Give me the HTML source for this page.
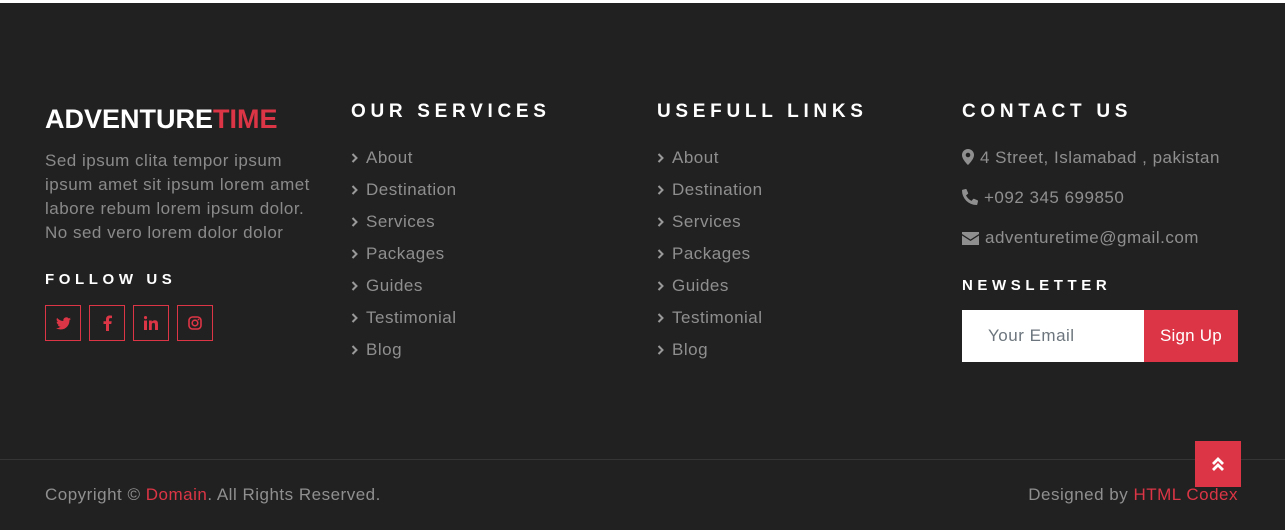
<!DOCTYPE html>
<html><head><style>
*{margin:0;padding:0;box-sizing:border-box}
body{width:1285px;height:530px;background:#212121;font-family:"Liberation Sans",sans-serif;color:#8f8f8f;position:relative;overflow:hidden;font-size:17px;letter-spacing:0.5px}
.top{position:absolute;top:0;left:0;width:1285px;height:3px;background:#fff}
.a{position:absolute;white-space:nowrap}
.logo{left:45px;top:104px;font-size:27px;font-weight:bold;color:#fff;letter-spacing:0}
.logo span{color:#dc3545}
.p{left:45px;top:149px;line-height:24px;color:#8a8a8a}
.h{font-size:19px;font-weight:bold;color:#fff;letter-spacing:4.7px;top:101px}
.h2{font-size:15px;font-weight:bold;color:#fff;letter-spacing:4.6px}
.soc{top:305px;width:36px;height:36px;border:1px solid #dc3545;color:#dc3545;display:flex;align-items:center;justify-content:center}
.ul{top:142px}
.ul div{height:32px;line-height:32px}
.ul svg{margin-right:8px;vertical-align:0}
.c svg{vertical-align:-2px;margin-right:6px}
.c{left:962px}
.inp{left:962px;top:310px;width:182px;height:52px;background:#fff;color:#6c757d;padding:16px 0 0 26px}
.btn{left:1144px;top:310px;width:94px;height:52px;background:#dc3545;color:#fff;padding:16px 0 0 16px;letter-spacing:0.2px}
.line{left:0;top:459px;width:1285px;height:1px;background:#353535}
.up{left:1195px;top:441px;width:46px;height:46px;background:#dc3545;display:flex;align-items:center;justify-content:center}
.r{color:#dc3545}
</style></head><body>
<div class="top"></div>
<div class="a logo">ADVENTURE<span>TIME</span></div>
<div class="a p">Sed ipsum clita tempor ipsum<br>ipsum amet sit ipsum lorem amet<br>labore rebum lorem ipsum dolor.<br>No sed vero lorem dolor dolor</div>
<div class="a h2" style="left:45px;top:271px">FOLLOW US</div>
<div class="a soc" style="left:45px"><svg width="15" height="13" viewBox="0 0 24 20"><path fill="#dc3545" d="M24 2.4a10 10 0 0 1-2.8.8A5 5 0 0 0 23.3.5a10 10 0 0 1-3.1 1.2A4.9 4.9 0 0 0 11.8 6 14 14 0 0 1 1.7.9a4.9 4.9 0 0 0 1.5 6.6A4.9 4.9 0 0 1 1 6.9a4.9 4.9 0 0 0 3.9 4.8 5 5 0 0 1-2.2.1 4.9 4.9 0 0 0 4.6 3.4A9.9 9.9 0 0 1 0 17.3 14 14 0 0 0 7.5 19.5c9.1 0 14-7.5 14-14v-.6A10 10 0 0 0 24 2.4z"/></svg></div>
<div class="a soc" style="left:89px"><svg width="9" height="16" viewBox="0 0 9 16"><path fill="#dc3545" d="M6 16V9h2.3l.4-2.8H6V4.5c0-.8.3-1.4 1.4-1.4H9V.6A19 19 0 0 0 6.7.5C4.5.5 3 1.8 3 4.3v1.9H.5V9H3v7z"/></svg></div>
<div class="a soc" style="left:133px"><svg width="14" height="14" viewBox="0 0 14 14"><path fill="#dc3545" d="M0 4.5h3V14H0zM1.5 0a1.6 1.6 0 1 1 0 3.2 1.6 1.6 0 0 1 0-3.2zM5 4.5h2.8v1.3C8.3 5 9.3 4.3 10.8 4.3 13.8 4.3 14 6.3 14 8.8V14h-3V9.4c0-1.1 0-2.5-1.5-2.5S7.8 8 7.8 9.3V14H5z"/></svg></div>
<div class="a soc" style="left:177px"><svg width="14" height="14" viewBox="0 0 14 14"><rect x="1" y="1" width="12" height="12" rx="3.5" fill="none" stroke="#dc3545" stroke-width="1.6"/><circle cx="7" cy="7" r="2.8" fill="none" stroke="#dc3545" stroke-width="1.6"/><circle cx="10.5" cy="3.5" r=".9" fill="#dc3545"/></svg></div>

<div class="a h" style="left:351px">OUR SERVICES</div>
<div class="a ul" style="left:351px">
<div><svg width="7" height="10" viewBox="0 0 7 10"><path d="M1.5 1l4 4-4 4" fill="none" stroke="#999" stroke-width="2"/></svg>About</div>
<div><svg width="7" height="10" viewBox="0 0 7 10"><path d="M1.5 1l4 4-4 4" fill="none" stroke="#999" stroke-width="2"/></svg>Destination</div>
<div><svg width="7" height="10" viewBox="0 0 7 10"><path d="M1.5 1l4 4-4 4" fill="none" stroke="#999" stroke-width="2"/></svg>Services</div>
<div><svg width="7" height="10" viewBox="0 0 7 10"><path d="M1.5 1l4 4-4 4" fill="none" stroke="#999" stroke-width="2"/></svg>Packages</div>
<div><svg width="7" height="10" viewBox="0 0 7 10"><path d="M1.5 1l4 4-4 4" fill="none" stroke="#999" stroke-width="2"/></svg>Guides</div>
<div><svg width="7" height="10" viewBox="0 0 7 10"><path d="M1.5 1l4 4-4 4" fill="none" stroke="#999" stroke-width="2"/></svg>Testimonial</div>
<div><svg width="7" height="10" viewBox="0 0 7 10"><path d="M1.5 1l4 4-4 4" fill="none" stroke="#999" stroke-width="2"/></svg>Blog</div>
</div>
<div class="a h" style="left:657px">USEFULL LINKS</div>
<div class="a ul" style="left:657px">
<div><svg width="7" height="10" viewBox="0 0 7 10"><path d="M1.5 1l4 4-4 4" fill="none" stroke="#999" stroke-width="2"/></svg>About</div>
<div><svg width="7" height="10" viewBox="0 0 7 10"><path d="M1.5 1l4 4-4 4" fill="none" stroke="#999" stroke-width="2"/></svg>Destination</div>
<div><svg width="7" height="10" viewBox="0 0 7 10"><path d="M1.5 1l4 4-4 4" fill="none" stroke="#999" stroke-width="2"/></svg>Services</div>
<div><svg width="7" height="10" viewBox="0 0 7 10"><path d="M1.5 1l4 4-4 4" fill="none" stroke="#999" stroke-width="2"/></svg>Packages</div>
<div><svg width="7" height="10" viewBox="0 0 7 10"><path d="M1.5 1l4 4-4 4" fill="none" stroke="#999" stroke-width="2"/></svg>Guides</div>
<div><svg width="7" height="10" viewBox="0 0 7 10"><path d="M1.5 1l4 4-4 4" fill="none" stroke="#999" stroke-width="2"/></svg>Testimonial</div>
<div><svg width="7" height="10" viewBox="0 0 7 10"><path d="M1.5 1l4 4-4 4" fill="none" stroke="#999" stroke-width="2"/></svg>Blog</div>
</div>
<div class="a h" style="left:962px">CONTACT US</div>
<div class="a c" style="top:148px"><svg width="12" height="16" viewBox="0 0 12 16"><path fill="#8f8f8f" d="M6 0a6 6 0 0 0-6 6c0 4.5 6 10 6 10s6-5.5 6-10a6 6 0 0 0-6-6zm0 8.3A2.3 2.3 0 1 1 6 3.7a2.3 2.3 0 0 1 0 4.6z"/></svg>4 Street, Islamabad , pakistan</div>
<div class="a c" style="top:188px"><svg width="16" height="16" viewBox="0 0 16 16"><path fill="#8f8f8f" d="M15.5 11.3l-3.5-1.5a.8.8 0 0 0-.9.2l-1.5 1.9A11.6 11.6 0 0 1 4 6.4l1.9-1.5a.8.8 0 0 0 .2-.9L4.6.5A.8.8 0 0 0 3.7 0L.6.7A.8.8 0 0 0 0 1.5 14.5 14.5 0 0 0 14.5 16a.8.8 0 0 0 .8-.6l.7-3.2a.8.8 0 0 0-.5-.9z"/></svg>+092 345 699850</div>
<div class="a c" style="top:228px"><svg width="17" height="13" viewBox="0 0 17 13"><path fill="#8f8f8f" d="M0 0h17v2L8.5 7.5 0 2zM0 3.5l8.5 5.5 8.5-5.5V13H0z"/></svg>adventuretime@gmail.com</div>
<div class="a h2" style="left:962px;top:277px">NEWSLETTER</div>
<div class="a inp">Your Email</div>
<div class="a btn">Sign Up</div>
<div class="a line"></div>
<div class="a up"><svg width="14" height="16" viewBox="0 0 14 16"><path d="M2 8l5-5 5 5M2 14l5-5 5 5" fill="none" stroke="#fff" stroke-width="2.8"/></svg></div>
<div class="a" style="left:45px;top:485px">Copyright © <span class="r">Domain</span>. All Rights Reserved.</div>
<div class="a" style="right:47px;top:485px">Designed by <span class="r">HTML Codex</span></div>
</body></html>
